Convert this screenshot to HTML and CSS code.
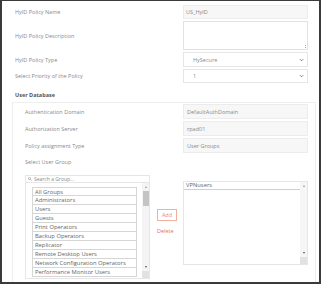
FILE: index.html
```html
<!DOCTYPE html>
<html lang="en">
<head>
  <meta charset="UTF-8">
  <title>HyID Policy</title>
  <link rel="stylesheet" href="styles.css">
</head>
<body>
  <div class="frame">
    <div class="form">
      <div class="label">HyID Policy Name</div>
      <div class="field">US_HyID</div>

      <div class="label">HyID Policy Description</div>
      <div class="field area"><span class="grip"></span></div>

      <div class="label">HyID Policy Type</div>
      <div class="field select">HySecure
        <svg class="chev" viewBox="0 0 6 4"><path d="M1 1l2 2 2-2" fill="none" stroke="#666" stroke-width="1"/></svg>
      </div>

      <div class="label">Select Priority of the Policy</div>
      <div class="field select">1
        <svg class="chev" viewBox="0 0 6 4"><path d="M1 1l2 2 2-2" fill="none" stroke="#666" stroke-width="1"/></svg>
      </div>
    </div>

    <div class="heading">User Database</div>
    <div class="panel">
      <div class="form inner">
        <div class="label">Authentication Domain</div>
        <div class="field ro">DefaultAuthDomain</div>

        <div class="label">Authorization Server</div>
        <div class="field ro">rpad01</div>

        <div class="label">Policy assignment Type</div>
        <div class="field ro">User Groups</div>
      </div>

      <div class="label sub">Select User Group</div>

      <div class="groups">
        <div class="picker">
          <div class="search">
            <svg class="mag" viewBox="0 0 8 8"><circle cx="3" cy="3" r="2.2" fill="none" stroke="#777" stroke-width="1"/><path d="M4.6 4.6L7 7" stroke="#777" stroke-width="1.2"/></svg>
            <span>Search a Group...</span>
          </div>
          <div class="listbox">
            <div class="items">
              <div class="item">All Groups</div>
              <div class="item">Administrators</div>
              <div class="item">Users</div>
              <div class="item">Guests</div>
              <div class="item">Print Operators</div>
              <div class="item">Backup Operators</div>
              <div class="item">Replicator</div>
              <div class="item">Remote Desktop Users</div>
              <div class="item">Network Configuration Operators</div>
              <div class="item">Performance Monitor Users</div>
            </div>
            <div class="scroll">
              <span class="arrow up"></span>
              <span class="thumb"></span>
              <span class="spacer"></span>
              <span class="arrow down"></span>
              <span class="corner"></span>
            </div>
          </div>
        </div>

        <div class="actions">
          <div class="btn-add">Add</div>
          <div class="btn-delete">Delete</div>
        </div>

        <div class="selected">
          <div class="items">
            <div class="item">VPNusers</div>
          </div>
          <div class="scroll">
            <span class="arrow up"></span>
            <span class="spacer"></span>
            <span class="arrow down"></span>
            <span class="corner"></span>
          </div>
        </div>
      </div>
    </div>
  </div>
</body>
</html>
```

FILE: styles.css
```css
body {
  margin: 0;
  font-family: "Open Sans", Arial, sans-serif;
  font-size: 5.5px;
  color: #8a8a8a;
}

.frame {
  width: 321px;
  height: 284px;
  box-sizing: border-box;
  border-style: solid;
  border-color: #3a3a3a;
  border-width: 1px 2px 2px 2px;
  background: #fff;
  overflow: hidden;
}

/* label / control rows */
.form {
  display: grid;
  grid-template-columns: 168px 125px;
  grid-template-rows: 14px 29px 15px 14px;
  row-gap: 2px;
  padding: 4px 0 0 13px;
  align-items: center;
}

.label {
  line-height: 8px;
}

.field {
  height: 100%;
  box-sizing: border-box;
  background: #f7f7f7;
  border: 1px solid #ececec;
  padding-left: 2px;
  display: flex;
  align-items: center;
  position: relative;
}

.field.area {
  background: #fff;
  border-color: #e2e2e2;
}

.grip {
  position: absolute;
  right: 1px;
  bottom: 1px;
  width: 3px;
  height: 3px;
  background: linear-gradient(135deg, transparent 50%, #aaa 50%, #aaa 60%, transparent 60%, transparent 75%, #aaa 75%);
}

.field.select {
  background: #fff;
  border-color: #e6e6e6;
  padding-left: 9px;
}

.chev {
  position: absolute;
  right: 3px;
  top: 50%;
  margin-top: -2px;
  width: 5px;
  height: 4px;
}

.heading {
  margin: 8px 0 0 13px;
  font-weight: bold;
  color: #555;
  line-height: 8px;
}

.panel {
  margin: 3px 3px 0 10px;
  border: 1px solid #eeeeee;
  border-bottom: none;
  height: 200px;
}

.form.inner {
  grid-template-columns: 158px 125px;
  grid-template-rows: 15px 15px 15px;
  padding: 1px 0 0 12px;
}

.field.ro {
  padding-left: 3px;
}

.label.sub {
  padding: 5px 0 0 12px;
}

/* group selection */
.groups {
  display: flex;
  margin: 9px 0 0 12px;
  align-items: flex-start;
}

.picker {
  width: 125px;
}

.search {
  height: 8px;
  box-sizing: border-box;
  border: 1px solid #e6e6e6;
  display: flex;
  align-items: center;
  gap: 2px;
  padding-left: 2px;
  font-size: 5px;
  color: #888;
}

.mag {
  width: 4px;
  height: 4px;
}

.listbox {
  height: 96px;
  box-sizing: border-box;
  border: 1px solid #e6e6e6;
  border-top: none;
  display: flex;
  justify-content: space-between;
  padding: 4px 0 0 6px;
}

.items {
  display: flex;
  flex-direction: column;
}

.listbox .items {
  width: 105px;
}

.item {
  height: 9px;
  box-sizing: border-box;
  border: 1px solid #d6d6d6;
  border-top: none;
  padding-left: 2px;
  color: #646464;
  font-size: 5.8px;
  line-height: 8px;
  white-space: nowrap;
}

.item:first-child {
  border-top: 1px solid #d6d6d6;
}

.scroll {
  width: 7px;
  display: flex;
  flex-direction: column;
  align-items: center;
  background: #f4f4f4;
  margin-top: -4px;
}

.arrow {
  width: 0;
  height: 0;
  margin: 2px 0;
  border-left: 1.5px solid transparent;
  border-right: 1.5px solid transparent;
}

.arrow.up {
  border-bottom: 2px solid #999;
  margin-top: 3px;
}

.arrow.down {
  border-top: 2px solid #555;
}

.thumb {
  width: 6px;
  height: 15px;
  background: #c4c4c4;
  margin-top: 1px;
}

.spacer {
  flex: 1;
}

.corner {
  width: 7px;
  height: 7px;
  background: #e2e2e2;
  margin-top: 1px;
}

.actions {
  width: 33px;
  display: flex;
  flex-direction: column;
  padding: 34px 0 0 7px;
  box-sizing: border-box;
}

.btn-add {
  width: 20px;
  height: 12px;
  box-sizing: border-box;
  border: 1px solid #f3b09c;
  color: #e98a70;
  display: flex;
  align-items: center;
  justify-content: center;
}

.btn-delete {
  margin-top: 6px;
  color: #e2735a;
}

.selected {
  width: 125px;
  height: 84px;
  box-sizing: border-box;
  border: 1px solid #e6e6e6;
  margin-top: 6px;
  display: flex;
  justify-content: space-between;
}

.selected .items {
  flex: 1;
}

.selected .item {
  border: none;
  border-bottom: 1px solid #cfcfcf;
  height: 8px;
  line-height: 7px;
}

.selected .scroll {
  margin-top: 0;
  background: #f6f6f6;
}
```
